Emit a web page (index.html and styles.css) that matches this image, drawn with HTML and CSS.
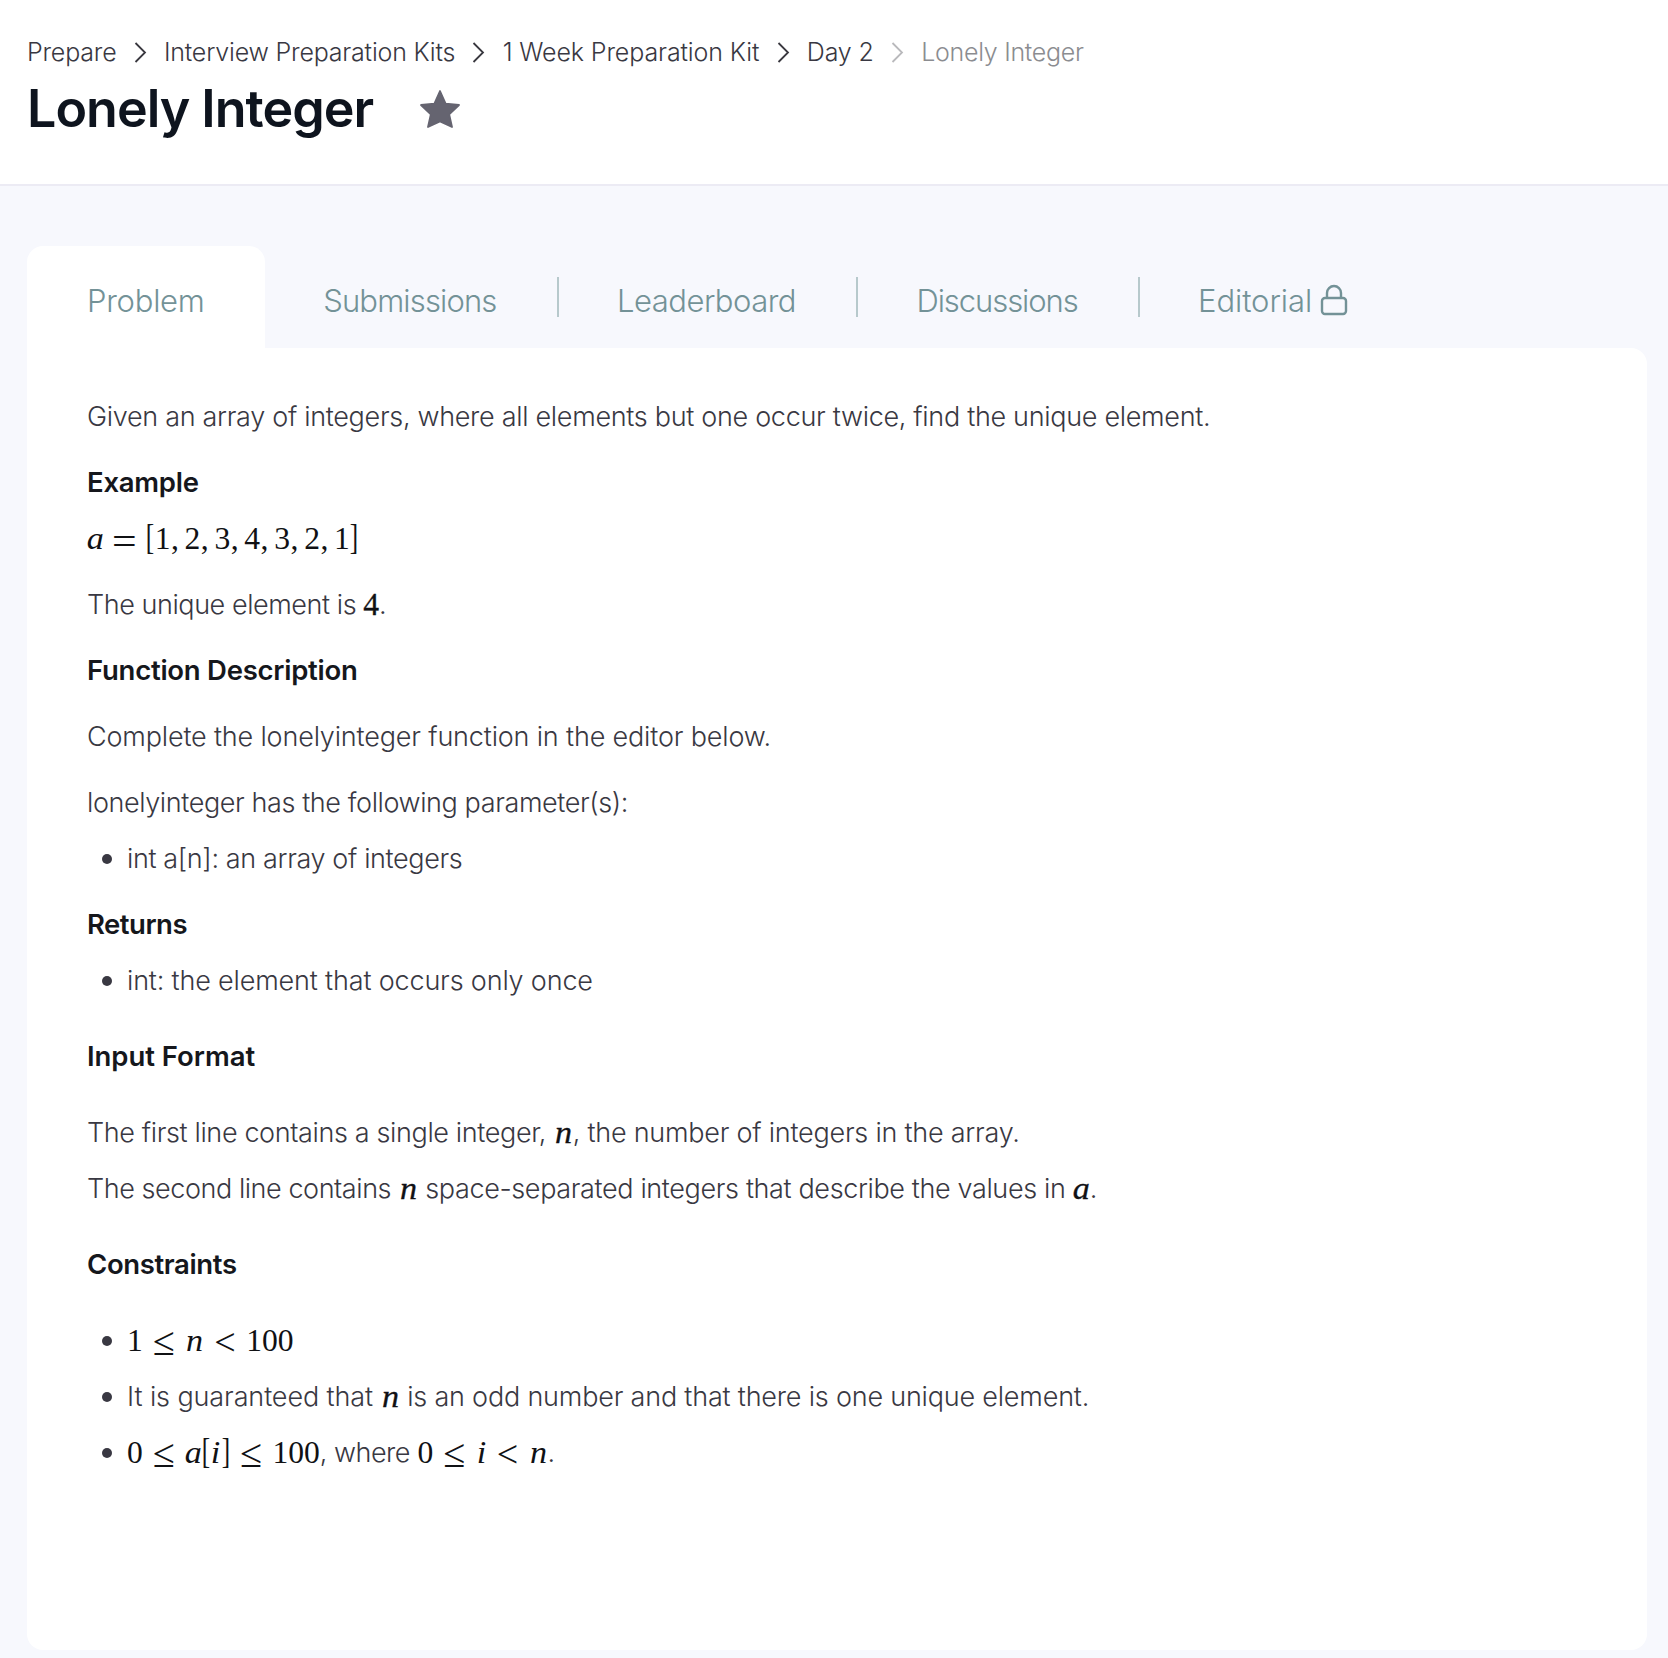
FILE: index.html
```html
<!DOCTYPE html>
<html lang="en">
<head>
<meta charset="utf-8">
<title>Lonely Integer</title>
<link rel="stylesheet" href="styles.css">
</head>
<body>
<header class="header">
  <nav class="crumbs">
    <a class="ls-20">Prepare</a>
    <svg class="chevron" viewBox="0 0 13 21"><path d="M1.5 1 11 10.5 1.5 20"/></svg>
    <a class="ls-20">Interview Preparation Kits</a>
    <svg class="chevron" viewBox="0 0 13 21"><path d="M1.5 1 11 10.5 1.5 20"/></svg>
    <a>1 Week Preparation Kit</a>
    <svg class="chevron" viewBox="0 0 13 21"><path d="M1.5 1 11 10.5 1.5 20"/></svg>
    <a>Day 2</a>
    <svg class="chevron muted" viewBox="0 0 13 21"><path d="M1.5 1 11 10.5 1.5 20"/></svg>
    <span class="current">Lonely Integer</span>
  </nav>
  <div class="title-row">
    <h1 class="title">Lonely Integer</h1>
    <svg class="star" viewBox="0 0 40 38"><path d="M20 1 25.6 13.6 39 15 29.2 24.4 32 37 20 31.5 8 37 10.8 24.4 1 15 14.4 13.6Z"/></svg>
  </div>
</header>
<main class="main">
  <nav class="tabs">
    <a class="tab active">Problem</a>
    <a class="tab ls-79">Submissions</a>
    <i class="divider"></i>
    <a class="tab ls-50">Leaderboard</a>
    <i class="divider"></i>
    <a class="tab ls-100">Discussions</a>
    <i class="divider"></i>
    <a class="tab ls-08">Editorial<svg class="lock" viewBox="0 0 28 32"><rect x="2" y="14" width="24" height="16" rx="3"/><path d="M7 14V9a7 7 0 0 1 14 0v5"/></svg></a>
  </nav>
  <section class="card">
    <p class="ls-30">Given an array of integers, where all elements but one occur twice, find the unique element.</p>
    <h2>Example</h2>
    <p class="tight"><span class="math"><i class="a">a</i><span class="rel eq">=</span><span class="bracket">[</span>1<span class="comma">,</span>2<span class="comma">,</span>3<span class="comma">,</span>4<span class="comma">,</span>3<span class="comma">,</span>2<span class="comma">,</span>1<span class="bracket">]</span></span></p>
    <p class="ls-44">The unique element is <span class="math bold">4</span>.</p>
    <h2>Function Description</h2>
    <p class="ls-17">Complete the lonelyinteger function in the editor below.</p>
    <p class="ls-38">lonelyinteger has the following parameter(s):</p>
    <ul class="tight">
      <li class="ls-35">int a[n]: an array of integers</li>
    </ul>
    <h2 class="ls-40">Returns</h2>
    <ul class="tight">
      <li class="ls-17">int: the element that occurs only once</li>
    </ul>
    <h2 class="spaced ls-0">Input Format</h2>
    <p class="spaced"><span class="ls-35">The first line contains a single integer,</span> <span class="math bold"><i class="n">n</i></span><span class="ls-24">, the number of integers in the array.</span></p>
    <p class="tight"><span class="ls-44">The second line contains</span> <span class="math bold"><i class="n">n</i></span> <span class="ls-35">space-separated integers that describe the values in</span> <span class="math bold"><i class="a">a</i></span>.</p>
    <h2 class="spaced ls-35">Constraints</h2>
    <ul class="spaced">
      <li><span class="math">1<span class="rel le">≤</span><i class="n">n</i><span class="rel lt">&lt;</span>100</span></li>
      <li><span class="ls-11">It is guaranteed that</span> <span class="math bold"><i class="n">n</i></span> <span class="ls-20">is an odd number and that there is one unique element.</span></li>
      <li><span class="math">0<span class="rel le">≤</span><i class="a">a</i><span class="bracket">[</span><i class="i">i</i><span class="bracket">]</span><span class="rel le">≤</span>100</span><span class="ls-50">, where</span> <span class="math">0<span class="rel le">≤</span><i class="i">i</i><span class="rel lt">&lt;</span><i class="n">n</i></span>.</li>
    </ul>
  </section>
</main>
</body>
</html>
```
FILE: styles.css
```css
* { box-sizing: border-box; }
body {
  margin: 0;
  min-height: 1658px;
  background: #f7f8fd;
  color: #393842;
  font-family: "Inter", sans-serif;
  font-weight: 320;
}
h1, h2, p, ul { margin: 0; padding: 0; }

.header {
  height: 186px;
  padding: 37px 27px 0;
  background: #fff;
  border-bottom: 2px solid #ecebf4;
}
.crumbs {
  display: flex;
  align-items: center;
  gap: 17.25px;
  font-size: 25px;
  line-height: 30px;
  letter-spacing: -0.12px;
  white-space: nowrap;
}
.chevron {
  width: 13px;
  height: 21px;
  fill: none;
  stroke: #39383f;
  stroke-width: 1.8;
}
.chevron.muted { stroke: #b9b9bc; }
.current { color: #8b8c90; letter-spacing: -0.3px; }
.title-row {
  display: flex;
  align-items: center;
  gap: 46.5px;
  margin-top: 16px;
}
.title {
  color: #0e141e;
  font-size: 52px;
  font-weight: 600;
  line-height: 52px;
  letter-spacing: -1px;
}
.star {
  width: 40px;
  height: 38px;
  fill: #656470;
  stroke: #656470;
  stroke-width: 1.8;
  stroke-linejoin: round;
}

.main { padding: 60px 21px 8px 27px; }
.tabs {
  display: flex;
  height: 102px;
  color: #739297;
  font-size: 31px;
  line-height: 97px;
  white-space: nowrap;
}
.tab { padding: 5.5px 60.3px 0 58.2px; }
.tab.active {
  width: 238px;
  padding-left: 60px;
  background: #fff;
  border-radius: 16px 16px 0 0;
  letter-spacing: -0.25px;
}
.divider {
  width: 2px;
  height: 40px;
  margin-top: 31px;
  background: #b7c9cc;
}
.lock {
  width: 28px;
  height: 32px;
  margin-left: 8px;
  vertical-align: -4px;
  fill: none;
  stroke: #739297;
  stroke-width: 2.4;
}

.card {
  height: 1302px;
  padding: 30px 60px 0;
  background: #fff;
  border-radius: 0 16px 16px 16px;
  font-size: 27px;
  line-height: 56px;
  white-space: nowrap;
}
.card > * { margin-top: 10px; }
.card > .tight { margin-top: 0; }
.card > .spaced { margin-top: 20px; }
.card h2 {
  color: #15171c;
  font-size: 27.5px;
  font-weight: 600;
  line-height: 56px;
  letter-spacing: -0.25px;
}
.card p, .card li {
  height: 56px;
  padding-top: 1px;
}
li { list-style: none; }
li::before {
  content: "";
  display: inline-block;
  width: 10px;
  height: 10px;
  margin: 0 15.5px 0 14.5px;
  border-radius: 50%;
  background: #393842;
  vertical-align: 4px;
}

.math {
  color: #101114;
  font-family: "Liberation Serif", serif;
  font-size: 31.6px;
  font-weight: 400;
  line-height: 0;
  letter-spacing: 0;
  vertical-align: -1px;
}
.math.bold { -webkit-text-stroke: 0.3px #101114; }
.math i, .math span { display: inline-block; text-align: center; }
.math i { font-size: 31.6px; transform: scaleX(1.08); }
.math .a { width: 16.7px; }
.math .n { width: 19px; }
.math .i { width: 10.9px; }
.math .rel { width: 24.6px; margin: 0 8.8px; }
.math .le { font-size: 40px; vertical-align: -4px; }
.math .lt { font-size: 38px; vertical-align: -4px; }
.math .eq { font-size: 38px; vertical-align: -5px; transform: scaleX(1.15); }
.math .bracket { width: 12px; margin: 0 -1.6px; font-size: 36px; transform: scaleX(0.7); }
.math .comma { width: 8.8px; margin-right: 5.3px; }

.card .ls-0 { letter-spacing: -0.04px; }
.ls-08 { letter-spacing: -0.08px; }
.ls-11 { letter-spacing: -0.11px; }
.ls-17 { letter-spacing: -0.17px; }
.ls-20 { letter-spacing: -0.2px; }
.ls-24 { letter-spacing: -0.24px; }
.ls-30 { letter-spacing: -0.31px; }
.ls-35, .card .ls-35 { letter-spacing: -0.37px; }
.ls-38 { letter-spacing: -0.4px; }
.card .ls-40 { letter-spacing: -0.5px; }
.ls-44 { letter-spacing: -0.44px; }
.ls-50 { letter-spacing: -0.5px; }
.ls-79 { letter-spacing: -0.85px; }
.ls-100 { letter-spacing: -1.08px; }
```
